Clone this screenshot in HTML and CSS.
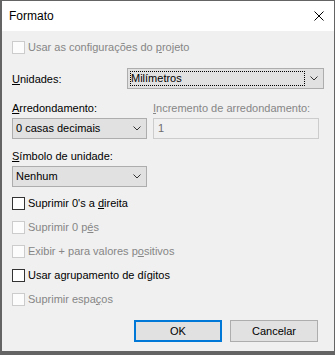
FILE: index.html
```html
<!DOCTYPE html>
<html lang="pt">
<head>
<meta charset="utf-8">
<title>Formato</title>
<link rel="stylesheet" href="styles.css">
</head>
<body>
<div class="window">
  <div class="titlebar">
    <span class="title">Formato</span>
    <svg class="close" width="10" height="10" viewBox="0 0 10 10"><path d="M0.5 0.5 L9.5 9.5 M9.5 0.5 L0.5 9.5" stroke="#000" stroke-width="1" fill="none"/></svg>
  </div>
  <div class="content">
    <label class="check disabled first"><span class="box"></span><span>Usar as configurações do <u>p</u>rojeto</span></label>

    <div class="units-row">
      <span class="label"><u>U</u>nidades:</span>
      <div class="combo wide">
        <span class="focus">Milímetros</span>
        <span class="arrow"><svg width="8" height="5" viewBox="0 0 8 5"><path d="M0.5 0.5 L4 4 L7.5 0.5" stroke="#333" fill="none"/></svg></span>
      </div>
    </div>

    <div class="pair labels">
      <span class="label"><u>A</u>rredondamento:</span>
      <span class="label disabled-text"><u>I</u>ncremento de arredondamento:</span>
    </div>
    <div class="pair fields">
      <div class="combo">
        <span class="value">0 casas decimais</span>
        <span class="arrow"><svg width="8" height="5" viewBox="0 0 8 5"><path d="M0.5 0.5 L4 4 L7.5 0.5" stroke="#333" fill="none"/></svg></span>
      </div>
      <div class="textbox">1</div>
    </div>

    <div class="label symbol-label"><u>S</u>ímbolo de unidade:</div>
    <div class="combo narrow symbol-combo">
      <span class="value">Nenhum</span>
      <span class="arrow"><svg width="8" height="5" viewBox="0 0 8 5"><path d="M0.5 0.5 L4 4 L7.5 0.5" stroke="#333" fill="none"/></svg></span>
    </div>

    <div class="checks">
      <label class="check"><span class="box"></span><span>Suprimir 0's a <u>d</u>ireita</span></label>
      <label class="check disabled"><span class="box"></span><span>Suprimir 0 p<u>é</u>s</span></label>
      <label class="check disabled"><span class="box"></span><span>Exibir + para valores p<u>o</u>sitivos</span></label>
      <label class="check"><span class="box"></span><span>Usar agrupamento de dí<u>g</u>itos</span></label>
      <label class="check disabled"><span class="box"></span><span>Suprimir espa<u>ç</u>os</span></label>
    </div>

    <div class="buttons">
      <button class="btn default">OK</button>
      <button class="btn">Cancelar</button>
    </div>
  </div>
</div>
</body>
</html>
```
FILE: styles.css
```css
html, body {
  margin: 0;
  padding: 0;
  background: #646464;
}
body {
  font-family: "Liberation Sans", Arial, sans-serif;
  font-size: 11px;
  color: #000;
}
.window {
  box-sizing: border-box;
  width: 335px;
  height: 355px;
  border: 1px solid #646464;
  border-left-width: 2px;
  border-bottom-width: 4px;
  background: #f0f0f0;
  display: flex;
  flex-direction: column;
}
.titlebar {
  height: 30px;
  background: #ffffff;
  display: flex;
  align-items: center;
  justify-content: space-between;
  padding: 0 10px 0 7px;
}
.title {
  font-size: 12px;
  line-height: 30px;
}
.close {
  display: block;
  margin-top: -1px;
}
.content {
  padding: 0 10px 0 10px;
  display: flex;
  flex-direction: column;
}
u {
  text-decoration: underline;
  text-underline-offset: 1px;
}
.check {
  display: flex;
  align-items: center;
  height: 13px;
  line-height: 13px;
  white-space: nowrap;
}
.check .box {
  box-sizing: border-box;
  width: 13px;
  height: 13px;
  border: 1px solid #333333;
  background: #ffffff;
  margin-right: 3px;
  flex: none;
}
.check.disabled {
  color: #868686;
}
.check.disabled .box {
  border-color: #cccccc;
  background: #fcfcfc;
}
.check.first {
  margin-top: 10px;
}
.units-row {
  margin-top: 14px;
  display: flex;
  align-items: center;
}
.units-row .label {
  flex: 1;
}
.label {
  line-height: 16px;
  white-space: nowrap;
}
.disabled-text {
  color: #868686;
}
.combo {
  box-sizing: border-box;
  height: 21px;
  border: 1px solid #adadad;
  background: #e1e1e1;
  display: flex;
  align-items: center;
  white-space: nowrap;
}
.combo.wide {
  width: 197px;
  padding: 2px 0 2px 2px;
}
.combo .focus {
  box-sizing: border-box;
  flex: 1;
  height: 15px;
  border: 1px dotted #000;
  line-height: 13px;
  padding-left: 0;
}
.combo .value {
  flex: 1;
  padding-left: 3px;
  line-height: 19px;
}
.combo .arrow {
  width: 18px;
  flex: none;
  display: flex;
  justify-content: center;
  align-items: center;
}
.combo .arrow svg {
  display: block;
}
.pair {
  display: grid;
  grid-template-columns: 135px 166px;
  column-gap: 6px;
}
.labels {
  margin-top: 11px;
}
.fields {
  margin-top: 2px;
}
.textbox {
  box-sizing: border-box;
  height: 21px;
  border: 1px solid #cccccc;
  background: #f0f0f0;
  color: #6d6d6d;
  line-height: 19px;
  padding-left: 4px;
}
.symbol-label {
  margin-top: 9px;
}
.symbol-combo {
  margin-top: 2px;
  width: 135px;
}
.checks {
  margin-top: 10px;
  display: flex;
  flex-direction: column;
  gap: 11px;
}
.buttons {
  margin-top: 14px;
  display: flex;
  justify-content: flex-end;
  gap: 8px;
  padding-right: 6px;
}
.btn {
  box-sizing: border-box;
  width: 88px;
  height: 22px;
  border: 1px solid #adadad;
  background: #e1e1e1;
  font-family: "Liberation Sans", Arial, sans-serif;
  font-size: 11px;
  color: #000;
  padding: 0;
  margin: 0;
}
.btn.default {
  border: 2px solid #0078d7;
}
```
